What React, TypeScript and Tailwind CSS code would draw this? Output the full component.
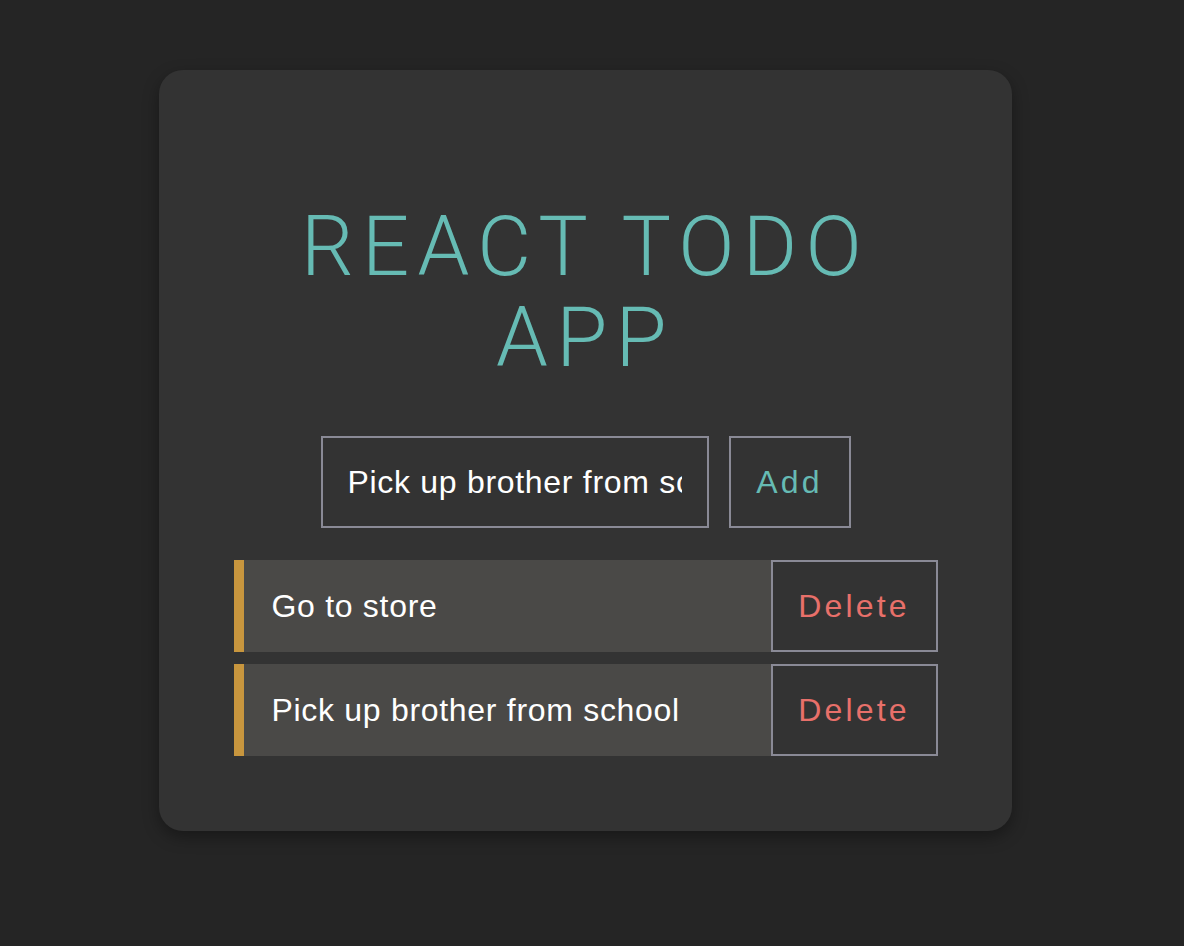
import { useState } from "react";

const initialTodos = ["Go to store", "Pick up brother from school"];

export default function App() {
  const [todos, setTodos] = useState(initialTodos);
  const [text, setText] = useState("Pick up brother from school");

  return (
    <div className="min-h-[946px] bg-[#252525] pt-[70px] pl-[159px] font-['Liberation_Sans',Arial,sans-serif]">
      <div className="w-[853px] h-[761px] rounded-[24px] bg-[#333333] shadow-[0_6px_16px_rgba(0,0,0,0.35)] flex flex-col items-center pt-[131px]">
        <h1 className="text-center text-[83px] leading-[91px] tracking-[8.3px] font-light text-[#66bbb4] font-['Roboto',sans-serif]">
          REACT TODO
          <br />
          APP
        </h1>

        <div className="mt-[53px] flex gap-[20px]">
          <input
            value={text}
            onChange={(e) => setText(e.target.value)}
            className="w-[388px] h-[92px] border-2 border-[#8a8a96] bg-transparent px-[25px] text-[32px] tracking-[0.7px] text-white outline-none"
          />
          <button
            onClick={() => text && setTodos([...todos, text])}
            className="w-[122px] h-[92px] border-2 border-[#8a8a96] text-[32px] tracking-[3.2px] text-[#66bbb4]"
          >
            Add
          </button>
        </div>

        <ul className="mt-[32px] w-[704px] flex flex-col gap-[12px]">
          {todos.map((todo, i) => (
            <li key={i} className="flex h-[92px] bg-[#4a4947] border-l-[10px] border-[#c8963e]">
              <span className="flex-1 flex items-center pl-[28px] text-[32px] tracking-[0.7px] text-white">
                {todo}
              </span>
              <button
                onClick={() => setTodos(todos.filter((_, j) => j !== i))}
                className="w-[167px] h-full border-2 border-[#8a8a96] bg-[#333333] text-[32px] tracking-[3.2px] text-[#e8706a]"
              >
                Delete
              </button>
            </li>
          ))}
        </ul>
      </div>
    </div>
  );
}
